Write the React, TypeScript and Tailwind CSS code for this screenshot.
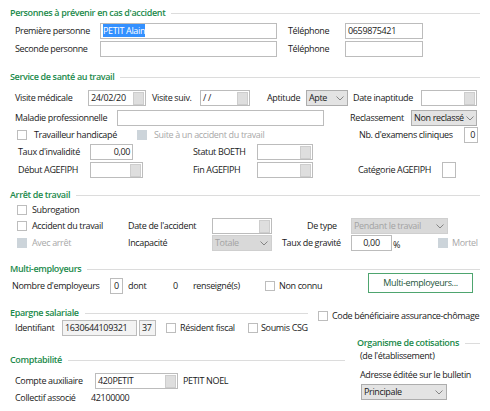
import React from 'react';

const Header = ({ title, w = 'w-[480px]', pl = 'pl-[10px]' }: { title: string; w?: string; pl?: string }) => (
  <div className={`flex items-center h-[14px] ${w} ${pl}`}>
    <span className="font-semibold text-[#1b8a4b] leading-[14px]">{title}</span>
    <span className="flex-1 h-px bg-[#dcdcdc] ml-[6px]" />
  </div>
);

const Field = ({
  w,
  value = '',
  align = 'text-left',
  btn = false,
  bg = 'bg-white',
  selected = false,
}: {
  w: string;
  value?: string;
  align?: string;
  btn?: boolean;
  bg?: string;
  selected?: boolean;
}) => (
  <div className={`flex items-center h-[16px] border border-[#bcbcbc] ${bg} ${w}`}>
    <span className={`flex-1 px-[2px] leading-[12px] ${align}`}>
      {selected ? <span className="bg-[#3390ff] text-white">{value}</span> : value}
    </span>
    {btn && <span className="w-[11px] h-[13px] mr-[1px] bg-[#dedede] border border-[#cdcdcd]" />}
  </div>
);

const Chevron = () => (
  <svg width="8" height="5" viewBox="0 0 8 5" className="mr-[3px] shrink-0">
    <polyline points="0.5,0.5 4,4 7.5,0.5" fill="none" stroke="#7a7a7a" strokeWidth="0.9" />
  </svg>
);

const Select = ({ w, value, disabled = false }: { w: string; value: string; disabled?: boolean }) => (
  <div
    className={`flex items-center h-[16px] border ${
      disabled ? 'border-[#cfcfcf] bg-[#d9d9d9] text-[#a3a3a3]' : 'border-[#adadad] bg-[#e3e3e3]'
    } ${w}`}
  >
    <span className="flex-1 px-[2px] leading-[12px]">{value}</span>
    <Chevron />
  </div>
);

const Check = ({ disabled = false }: { disabled?: boolean }) => (
  <span
    className={`inline-block shrink-0 w-[10px] h-[10px] border ${
      disabled ? 'bg-[#ccd4da] border-[#ccd4da]' : 'bg-white border-[#bdbdbd]'
    }`}
  />
);

export default function App() {
  return (
    <div className="w-[490px] h-[411px] bg-white overflow-hidden font-['Open_Sans',sans-serif] text-[9px] tracking-[-0.35px] text-[#1a1a1a] leading-[12px] whitespace-nowrap">
      {/* Personnes à prévenir */}
      <div className="pt-[6px]">
        <Header title="Personnes à prévenir en cas d'accident" />
        <div className="mt-[2px] flex items-center h-[18px] pl-[15px]">
          <span className="w-[85px]">Première personne</span>
          <Field w="w-[177px]" value="PETIT Alain" selected />
          <span className="ml-[11px] w-[57px]">Téléphone</span>
          <Field w="w-[78px]" value="0659875421" />
        </div>
        <div className="flex items-center h-[18px] pl-[15px]">
          <span className="w-[85px]">Seconde personne</span>
          <Field w="w-[177px]" />
          <span className="ml-[11px] w-[57px]">Téléphone</span>
          <Field w="w-[78px]" />
        </div>
      </div>

      {/* Service de santé */}
      <div className="mt-[12px]">
        <Header title="Service de santé au travail" />
        <div className="mt-[5px] flex items-center h-[18px] pl-[15px]">
          <span className="w-[73px]">Visite médicale</span>
          <Field w="w-[58px]" value="24/02/20" btn />
          <span className="ml-[6px] w-[48px]">Visite suiv.</span>
          <Field w="w-[50px]" value="  /  /" btn />
          <span className="ml-[17px] w-[39px]">Aptitude</span>
          <Select w="w-[42px]" value="Apte" />
          <span className="ml-[5px] w-[68px]">Date inaptitude</span>
          <Field w="w-[56px]" btn />
        </div>
        <div className="mt-[2px] flex items-center h-[18px] pl-[15px]">
          <span className="w-[102px]">Maladie professionnelle</span>
          <Field w="w-[207px]" />
          <span className="ml-[26px] w-[61px]">Reclassement</span>
          <Select w="w-[66px]" value="Non reclassé" />
        </div>
        <div className="flex items-center h-[16px] pl-[17px]">
          <Check />
          <span className="ml-[7px] w-[103px]">Travailleur handicapé</span>
          <Check disabled />
          <span className="ml-[7px] w-[205px] text-[#a8a8a8]">Suite à un accident du travail</span>
          <span className="w-[105px]">Nb. d'examens cliniques</span>
          <Field w="w-[14px]" value="0" align="text-right" />
        </div>
        <div className="flex items-center h-[18px] pl-[18px]">
          <span className="w-[72px]">Taux d'invalidité</span>
          <Field w="w-[43px]" value="0,00" align="text-right" />
          <span className="ml-[60px] w-[64px]">Statut BOETH</span>
          <Field w="w-[56px]" btn />
        </div>
        <div className="flex items-center h-[18px] pl-[18px]">
          <span className="w-[72px]">Début AGEFIPH</span>
          <Field w="w-[53px]" btn />
          <span className="ml-[50px] w-[64px]">Fin AGEFIPH</span>
          <Field w="w-[56px]" btn />
          <span className="ml-[45px] w-[84px]">Catégorie AGEFIPH</span>
          <Field w="w-[14px]" />
        </div>
      </div>

      {/* Arrêt de travail */}
      <div className="mt-[9px]">
        <Header title="Arrêt de travail" />
        <div className="flex items-center h-[16px] pl-[17px]">
          <Check />
          <span className="ml-[5px]">Subrogation</span>
        </div>
        <div className="flex items-center h-[16px] pl-[17px]">
          <Check />
          <span className="ml-[5px] w-[96px]">Accident du travail</span>
          <span className="w-[84px]">Date de l'accident</span>
          <Field w="w-[60px]" btn />
          <span className="ml-[35px] w-[44px]">De type</span>
          <Select w="w-[97px]" value="Pendant le travail" disabled />
        </div>
        <div className="flex items-center h-[18px] pl-[17px]">
          <Check disabled />
          <span className="ml-[5px] w-[96px] text-[#a8a8a8]">Avec arrêt</span>
          <span className="w-[84px]">Incapacité</span>
          <Select w="w-[60px]" value="Totale" disabled />
          <span className="ml-[10px] w-[69px]">Taux de gravité</span>
          <Field w="w-[41px]" value="0,00" align="text-center" />
          <span className="ml-[1px] w-[45px] pt-[3px]">%</span>
          <Check disabled />
          <span className="ml-[4px] text-[#a8a8a8]">Mortel</span>
        </div>
      </div>

      {/* Multi-employeurs */}
      <div className="mt-[10px]">
        <Header title="Multi-employeurs" />
        <div className="flex items-center h-[20px] pl-[12px]">
          <span className="w-[98px]">Nombre d'employeurs</span>
          <Field w="w-[13px]" value="0" align="text-center" />
          <span className="ml-[5px] w-[45px]">dont</span>
          <span className="w-[20px]">0</span>
          <span className="w-[72px]">renseigné(s)</span>
          <Check />
          <span className="ml-[4px] w-[89px]">Non connu</span>
          <button className="w-[105px] h-[20px] mb-[6px] border border-[#4ea56f] bg-white text-[#24553a] text-[9px] leading-[12px]">
            Multi-employeurs...
          </button>
        </div>
      </div>

      {/* Epargne salariale + code bénéficiaire */}
      <div className="mt-[10px] flex">
        <div className="w-[308px]">
          <Header title="Epargne salariale" w="w-[308px]" />
          <div className="flex items-center h-[16px] pl-[15px]">
            <span className="w-[47px]">Identifiant</span>
            <Field w="w-[75px]" value="1630644109321" bg="bg-[#f3f3f3]" />
            <span className="ml-[2px]">
              <Field w="w-[17px]" value="37" bg="bg-[#f3f3f3]" />
            </span>
            <span className="ml-[10px] flex items-center">
              <Check />
            </span>
            <span className="ml-[4px] w-[68px]">Résident fiscal</span>
            <Check />
            <span className="ml-[3px]">Soumis CSG</span>
          </div>
        </div>
        <div className="flex items-center h-[14px] mt-[3px] ml-[10px]">
          <Check />
          <span className="ml-[4px]">Code bénéficiaire assurance-chômage</span>
        </div>
      </div>

      {/* Comptabilité + Organisme */}
      <div className="flex">
        <div className="w-[345px]">
          <div className="mt-[17px]">
            <Header title="Comptabilité" w="w-[345px]" />
          </div>
          <div className="mt-[5px] flex items-center h-[18px] pl-[15px]">
            <span className="w-[80px]">Compte auxiliaire</span>
            <Field w="w-[83px]" value="420PETIT" btn />
            <span className="ml-[5px]">PETIT NOEL</span>
          </div>
          <div className="flex items-center h-[16px] pl-[15px]">
            <span className="w-[76px]">Collectif associé</span>
            <span>42100000</span>
          </div>
        </div>
        <div className="ml-[12px] w-[123px]">
          <Header title="Organisme de cotisations" w="w-[123px]" pl="pl-0" />
          <div className="h-[12px] pl-[3px] flex items-center">(de l'établissement)</div>
          <div className="mt-[7px] h-[12px] pl-[3px] flex items-center">Adresse éditée sur le bulletin</div>
          <div className="mt-[3px] pl-[4px]">
            <Select w="w-[86px]" value="Principale" />
          </div>
        </div>
      </div>
    </div>
  );
}
